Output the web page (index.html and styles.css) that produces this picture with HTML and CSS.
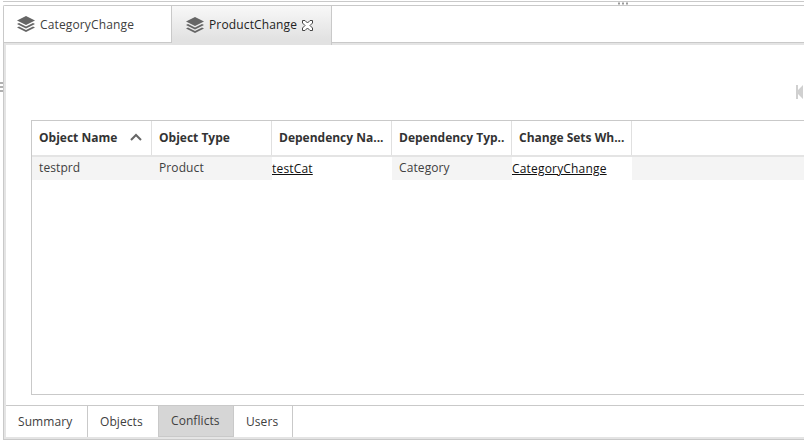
FILE: index.html
```html
<!DOCTYPE html>
<html lang="en">
<head>
<meta charset="utf-8">
<title>ProductChange</title>
<link rel="stylesheet" href="styles.css">
</head>
<body>
<svg class="defs" width="0" height="0"><symbol id="layers" viewBox="0 0 18 16"><path d="M9 0L18 4.5 9 9 0 4.5Z"/><path d="M2 7.1L9 10.6 16 7.1 18 8.1 9 12.6 0 8.1Z"/><path d="M2 10.5L9 14 16 10.5 18 11.5 9 16 0 11.5Z"/></symbol></svg>
<div class="hsplit"><span class="grip"><i></i><i></i><i></i></span></div>
<div class="middle">
  <div class="vsplit"><span class="grip vertical"><i></i><i></i><i></i></span></div>
  <main class="panel">
    <nav class="tabs">
      <div class="tab first"><svg class="layers"><use href="#layers"/></svg><span>CategoryChange</span></div>
      <div class="tab active"><svg class="layers"><use href="#layers"/></svg><span>ProductChange</span>
        <svg class="close" viewBox="0 0 11 11"><path d="M.5 .5H3L5.5 3 8 .5H10.5V3L8 5.5 10.5 8V10.5H8L5.5 8 3 10.5H.5V8L3 5.5 .5 3Z"/></svg></div>
    </nav>
    <section class="content">
      <div class="pager"><svg class="first-page" viewBox="0 0 14 14"><path d="M0 0H2V5L7 0V14L2 9V14H0Z"/></svg></div>
      <div class="grid">
        <div class="row head">
          <div class="cell sorted"><span>Object Name</span><svg class="sort" viewBox="0 0 12 8"><path d="M1 7L6 2 11 7"/></svg></div>
          <div class="cell">Object Type</div>
          <div class="cell">Dependency Na...</div>
          <div class="cell">Dependency Typ..</div>
          <div class="cell">Change Sets Wh...</div>
        </div>
        <div class="row data">
          <div class="cell">testprd</div>
          <div class="cell">Product</div>
          <div class="cell link"><a>testCat</a></div>
          <div class="cell">Category</div>
          <div class="cell link"><a>CategoryChange</a></div>
        </div>
      </div>
      <nav class="bottom-tabs">
        <div class="btab summary">Summary</div>
        <div class="btab objects">Objects</div>
        <div class="btab conflicts">Conflicts</div>
        <div class="btab users">Users</div>
      </nav>
    </section>
  </main>
</div>
</body>
</html>
```
FILE: styles.css
```css
* { box-sizing: border-box; }
body { margin: 0; height: 442px; overflow: hidden; background: #fff; color: #404040; font: 12px/18px "Open Sans", "Noto Sans", sans-serif; }
.defs { display: none; }
.hsplit { height: 4px; margin: 1px 0 0 3px; border-top: 1px solid #c9c9c9; padding-left: 615px; }
.grip { display: flex; gap: 2px; }
.grip i { width: 2px; height: 3px; background: linear-gradient(#ccc 1px, #999 1px 2px, #ccc 2px); }
.grip.vertical { flex-direction: column; padding-top: 77px; }
.grip.vertical i { width: 3px; height: 2px; background: #b0b0b0; }
.middle { display: flex; height: 435px; }
.vsplit { width: 3px; }
.panel { flex: 1; min-width: 0; border: 1px solid #c9c9c9; border-right: 0; border-top-left-radius: 2px; background: #e4e4e4; }
.tabs { display: flex; height: 37px; background: #fff; border-bottom: 1px solid #c9c9c9; }
.tab { display: flex; align-items: center; height: 36px; border-right: 1px solid #c9c9c9; color: #404040; }
.tab span { line-height: 18px; padding-top: 1px; letter-spacing: .14px; }
.first { width: 168px; padding-left: 13px; }
.active { width: 160px; height: 39px; padding: 0 0 2px 14px; color: #222; background: linear-gradient(#f8f8f8, #e2e2e2 85%); }
.active .layers { margin-top: 1px; }
.layers { width: 18px; height: 16px; margin-right: 5px; fill: #666; }
.close { width: 11px; height: 11px; margin: 1px 0 0 5px; fill: #fff; stroke: #444; stroke-width: 1; }
.content { display: flex; flex-direction: column; height: 392px; margin: 2px 0 0 2px; background: #fff; }
.pager { height: 75px; padding: 40px 0 0 790px; }
.first-page { display: block; width: 14px; height: 14px; fill: #d0d0d0; }
.grid { height: 275px; margin-left: 25px; border: 1px solid #c9c9c9; border-right: 0; }
.row { display: flex; }
.cell { width: 120px; padding-left: 7px; white-space: nowrap; overflow: hidden; }
.head { height: 36px; border-bottom: 2px solid #e4e4e4; color: #333; font-weight: 700; line-height: 33px; }
.head .cell { border-right: 1px solid #e0e0e0; }
.sorted { display: flex; align-items: flex-start; }
.sort { width: 12px; height: 8px; margin: 12px 0 0 13px; fill: none; stroke: #666; stroke-width: 2; }
.data { height: 23px; background: #f4f4f4; line-height: 22px; letter-spacing: .1px; }
.link { padding-left: 0; background: #fff; color: #111; line-height: 24px; letter-spacing: .18px; }
.link a { text-decoration: underline; }
.bottom-tabs { display: flex; height: 32px; margin-top: 10px; border-top: 1px solid #c9c9c9; }
.btab { border-right: 1px solid #c9c9c9; padding-left: 12px; line-height: 31px; letter-spacing: .07px; }
.summary { width: 82px; }
.objects { width: 71px; }
.conflicts { width: 75px; background: #d6d6d6; line-height: 29px; border-bottom: 1px solid #c9c9c9; }
.users { width: 59px; }
```
